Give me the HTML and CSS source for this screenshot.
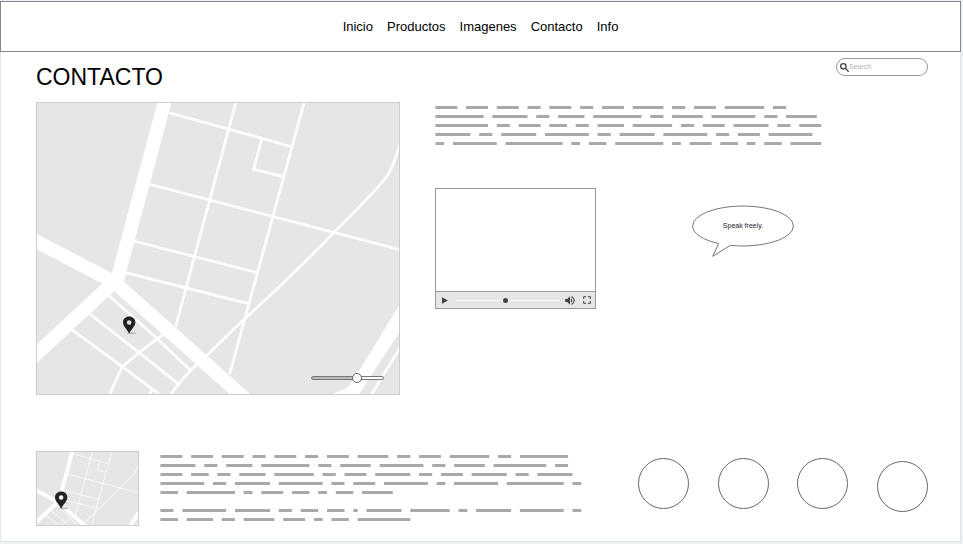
FILE: index.html
```html
<!DOCTYPE html>
<html lang="es">
<head>
<meta charset="utf-8">
<title>Contacto</title>
<link rel="stylesheet" href="styles.css">
</head>
<body>
<svg class="defs" aria-hidden="true">
  <symbol id="streets" viewBox="18 126 1092 879" preserveAspectRatio="xMinYMin slice">
    <rect x="18" y="126" width="1092" height="879" fill="#e6e6e6"/>
    <g fill="none" stroke="#fff">
      <path stroke-width="41" d="M408 110L260 665"/>
      <path stroke-width="41" d="M0 534L252 666L650 1020M252 666L0 900"/>
      <path stroke-width="8" d="M618 126L437 800M823 126L599 942M418 158L785 260M695 237L671 328L760 350M358 373L1110 569M311 543L681 638M286 638L655 731"/>
      <path stroke-width="8" d="M1110 250Q1090 320 1072 347Q1045 385 912 517Q780 655 645 775L530 887M504 910Q470 940 420 1005"/>
      <path stroke-width="8" d="M238 708L380 835L483 932M180 762L327 878L444 971M127 810L277 920L388 1003M403 820L327 878L277 920Q258 960 238 1005M366 990L357 1005"/>
      <path stroke-width="8" d="M1110 862L1024 1005"/>
    </g>
    <path fill="#fff" d="M1110 732V814L986 1005H900L948 985Q960 976 970 960Z"/>
  </symbol>
  <symbol id="pin" viewBox="0 0 40 56">
    <ellipse cx="27" cy="52" rx="14" ry="3" fill="#bbb"/>
    <path fill="#222" fill-rule="evenodd" d="M19 0C8 0 0 8 0 18C0 32 12 38 19 53C26 38 38 32 38 18C38 8 30 0 19 0ZM19 12A7 7 0 1 1 19 26A7 7 0 1 1 19 12Z"/>
  </symbol>
</svg>

<div class="page">
  <header class="site-header">
    <nav class="nav">
      <a href="#">Inicio</a>
      <a href="#">Productos</a>
      <a href="#">Imagenes</a>
      <a href="#">Contacto</a>
      <a href="#">Info</a>
    </nav>
  </header>

  <main class="content">
    <div class="title-row">
      <h1>CONTACTO</h1>
      <label class="search">
        <svg viewBox="0 0 27 27" aria-hidden="true"><circle cx="10" cy="10" r="8"/><path d="M16 16L26 26"/></svg>
        <input type="search" placeholder="Search" aria-label="Search">
      </label>
    </div>

    <div class="contact">
      <div class="map">
        <svg class="map-art" viewBox="0 0 364 293" aria-hidden="true"><use href="#streets" width="364" height="293"/></svg>
        <svg class="map-pin" aria-hidden="true"><use href="#pin"/></svg>
        <input class="map-zoom" type="range" min="0" max="100" value="66" aria-label="Zoom">
      </div>

      <div class="details">
        <svg class="greek" viewBox="0 0 387 40" width="387" height="40" aria-hidden="true">
          <g transform="translate(.4 -.5) scale(4.384 1)">
            <path d="M0 2h5m2 0h5m2 0h5m2 0h3m2 0h5m2 0h3m2 0h5m2 0h7m2 0h3m2 0h5m2 0h9m2 0h3"/>
            <path d="M0 11h11m2 0h8m2 0h3m2 0h6m2 0h11m2 0h3m2 0h7m2 0h10m2 0h3m2 0h7"/>
            <path d="M0 20h12m2 0h3m2 0h5m2 0h4m2 0h3m2 0h6m2 0h9m2 0h3m2 0h5m2 0h8m2 0h3m2 0h5"/>
            <path d="M0 29h8m2 0h3m2 0h8m2 0h10m2 0h3m2 0h8m2 0h10m2 0h3m2 0h5m2 0h10"/>
            <path d="M0 38h2m2 0h10m2 0h13m2 0h2m2 0h4m2 0h11m2 0h2m2 0h5m2 0h4m2 0h2m2 0h4m2 0h7"/>
          </g>
        </svg>
        <div class="media">
          <div class="player">
            <div class="screen"></div>
            <div class="controls">
              <button class="play" type="button" aria-label="Play"><svg viewBox="0 0 18 20"><path d="M0 0L18 10L0 20Z"/></svg></button>
              <input class="seek" type="range" min="0" max="100" value="47" aria-label="Seek">
              <button class="volume" type="button" aria-label="Volume"><svg viewBox="0 0 28 26"><path d="M0 9H6L14 1V25L6 17H0Z"/><path class="wave" d="M17 8Q21 13 17 18M18 2Q25 4 26 13Q25 22 18 24"/></svg></button>
              <button class="full" type="button" aria-label="Fullscreen"><svg viewBox="0 0 24 24"><path class="wave" d="M2 9V2H9M15 2H22V9M22 15V22H15M9 22H2V15"/></svg></button>
            </div>
          </div>
          <div class="bubble">
            <svg viewBox="36 28 306 156" aria-hidden="true"><path d="M116 143.5A151 60 0 0 1 38 91A151 60 0 0 1 189 31A151 60 0 0 1 340 91A151 60 0 0 1 189 151A151 60 0 0 1 151 149L98 182Z"/></svg>
            <p>Speak freely.</p>
          </div>
        </div>
      </div>
    </div>

    <footer class="summary">
      <div class="map mini">
        <svg class="map-art" viewBox="0 0 103 75" aria-hidden="true"><use href="#streets" width="103" height="75"/></svg>
        <svg class="map-pin" aria-hidden="true"><use href="#pin"/></svg>
      </div>
      <svg class="greek" viewBox="0 0 422 67" width="422" height="67" aria-hidden="true">
        <g transform="translate(.4 -.5) scale(4.384 1)">
          <path d="M0 2h5m2 0h5m2 0h5m2 0h3m2 0h5m2 0h3m2 0h5m2 0h7m2 0h3m2 0h5m2 0h9m2 0h3m2 0h11"/>
          <path d="M0 11h8m2 0h3m2 0h6m2 0h11m2 0h3m2 0h7m2 0h10m2 0h3m2 0h7m2 0h12m2 0h3"/>
          <path d="M0 20h5m2 0h4m2 0h3m2 0h6m2 0h9m2 0h3m2 0h5m2 0h8m2 0h3m2 0h5m2 0h8m2 0h3m2 0h8"/>
          <path d="M0 29h10m2 0h3m2 0h8m2 0h10m2 0h3m2 0h5m2 0h10m2 0h2m2 0h10m2 0h13m2 0h2"/>
          <path d="M0 38h4m2 0h11m2 0h2m2 0h5m2 0h4m2 0h2m2 0h4m2 0h7"/>
          <path d="M0 56h3m2 0h10m2 0h8m2 0h3m2 0h4m2 0h4m2 0h1m2 0h8m2 0h9m2 0h2m2 0h8m2 0h10m2 0h2"/>
          <path d="M0 65h4m2 0h6m2 0h3m2 0h7m2 0h5m2 0h2m2 0h4m2 0h12"/>
        </g>
      </svg>
      <div class="circles">
        <span></span><span></span><span></span><span class="low"></span>
      </div>
    </footer>
  </main>
</div>
</body>
</html>
```

FILE: styles.css
```css
* { box-sizing: border-box; }

body {
  margin: 0;
  padding: 1px 2px 2px 0;
  min-height: 100vh;
  display: flex;
  background: #edf0f6;
  color: #000;
  font-family: "Liberation Sans", Arial, sans-serif;
}

svg { display: block; }
h1, p { margin: 0; font-weight: normal; }
.defs { position: absolute; width: 0; height: 0; }

button {
  padding: 0;
  border: 0;
  background: none;
}

input[type="range"] {
  appearance: none;
  margin: 0;
  background: none;
}

.page {
  flex: 1;
  min-width: 0;
  background: #fff;
  box-shadow: inset 0 0 0 1px #dfe4e9;
}

.site-header {
  height: 51px;
  border: 1px solid #85878b;
  background: #fff;
}

.nav {
  height: 100%;
  display: flex;
  justify-content: center;
  align-items: center;
  gap: 14px;
  font-size: 13px;
}

.nav a { color: inherit; text-decoration: none; }

.content { padding: 0 33px 16px 36px; }

.title-row {
  height: 50px;
  display: flex;
  justify-content: space-between;
  align-items: flex-start;
}

h1 {
  margin-top: 12px;
  font-size: 23px;
  line-height: 26px;
}

.search {
  width: 92px;
  height: 18px;
  margin-top: 6px;
  padding: 0 3px;
  display: flex;
  align-items: center;
  border: 1px solid #999;
  border-radius: 9px;
}

.search svg {
  flex: none;
  width: 9px;
  height: 9px;
  fill: none;
  stroke: #444;
  stroke-width: 4;
}

.search input {
  min-width: 0;
  flex: 1;
  padding: 0;
  border: 0;
  outline: 0;
  background: none;
  font: 7px/10px "Liberation Sans", Arial, sans-serif;
}

.search input::placeholder { color: #b8b0ac; }

.contact {
  display: grid;
  grid-template-columns: 364fr 493fr;
  gap: 35px;
}

.map {
  position: relative;
  align-self: start;
}

.map::after {
  content: "";
  position: absolute;
  inset: 0;
  border: 1px solid #ccc;
  pointer-events: none;
}

.map-art { width: 100%; height: auto; }

.map-pin {
  position: absolute;
  left: 24%;
  top: 73%;
  width: 13px;
  height: 19px;
}

.mini .map-pin { left: 18%; top: 53%; }

.map-zoom {
  position: absolute;
  right: 16px;
  bottom: 12px;
  width: 73px;
  height: 10px;
}

.map-zoom::-webkit-slider-runnable-track {
  height: 4px;
  border: 1px solid #777;
  border-radius: 2px;
  background: linear-gradient(90deg, #bbb 65%, #fff 65%);
}

.map-zoom::-webkit-slider-thumb {
  appearance: none;
  width: 10px;
  height: 10px;
  margin-top: -4px;
  border: 1px solid #666;
  border-radius: 50%;
  background: #fff;
}

.greek {
  flex: none;
  fill: none;
  stroke: #a9a9a9;
  stroke-width: 3;
}

.details { padding-top: 4px; }

.media {
  margin-top: 42px;
  display: flex;
  align-items: flex-start;
  gap: 96px;
}

.player {
  width: 161px;
  border: 1px solid #999;
}

.screen { height: 102px; }

.controls {
  height: 17px;
  padding: 0 4px 0 6px;
  display: flex;
  align-items: center;
  border-top: 1px solid #999;
  background: #e6e6e6;
}

.controls svg { width: 100%; height: 100%; fill: #444; }
.controls .wave { fill: none; stroke: #444; stroke-width: 3; }
.play { width: 6px; height: 7px; }
.volume { width: 10px; height: 9px; }
.full { width: 8px; height: 8px; margin-left: 8px; }

.controls .seek {
  flex: 1;
  min-width: 0;
  height: 5px;
  margin: 0 4px 0 8px;
}

.seek::-webkit-slider-runnable-track {
  height: 1px;
  background: #fff;
}

.seek::-webkit-slider-thumb {
  appearance: none;
  width: 5px;
  height: 5px;
  margin-top: -2px;
  border-radius: 50%;
  background: #444;
}

.bubble {
  width: 102px;
  margin-top: 17px;
  display: grid;
}

.bubble svg {
  grid-area: 1 / 1;
  width: 100%;
  overflow: visible;
  fill: #fff;
  stroke: #777;
  stroke-width: 3;
}

.bubble p {
  grid-area: 1 / 1;
  padding-top: 16px;
  color: #223;
  font-size: 7px;
  line-height: 10px;
  text-align: center;
}

.summary {
  margin-top: 56px;
  display: flex;
  align-items: flex-start;
}

.mini { width: 103px; flex: none; }

.summary .greek { margin: 4px 0 0 21px; }

.circles {
  width: 290px;
  margin: 7px 0 0 auto;
  display: flex;
  justify-content: space-between;
}

.circles span {
  width: 51px;
  height: 51px;
  border: 1px solid #666;
  border-radius: 50%;
}

.circles .low { margin-top: 3px; }
```
